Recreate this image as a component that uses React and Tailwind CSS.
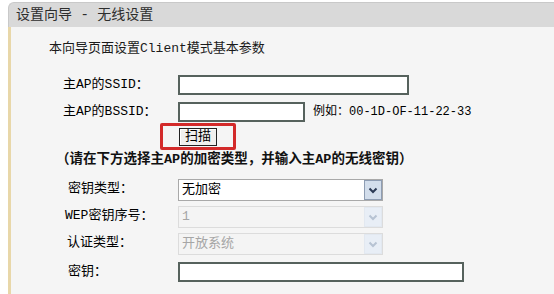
import React from 'react';

const font = { fontFamily: '"Liberation Mono", "Noto Sans CJK SC", monospace' };

const Chevron = ({ disabled }) => (
  <svg width="10" height="7" viewBox="0 0 10 7">
    <polyline
      points="1.5,1.5 5,5 8.5,1.5"
      fill="none"
      stroke={disabled ? '#b7c3d3' : '#2b3a55'}
      strokeWidth="2"
    />
  </svg>
);

const Select = ({ value, disabled }) => (
  <div
    className={`w-[205px] h-[22px] flex items-stretch border ${
      disabled ? 'border-[#dcdcdc] bg-[#f4f4f4] text-[#a6a6a6]' : 'border-[#a9a9a9] bg-white text-black'
    }`}
  >
    <div className="flex-1 flex items-center pl-[3px] text-[13px]">{value}</div>
    <div
      className={`w-[18px] flex items-center justify-center border ${
        disabled ? 'border-[#e2e8f0] bg-[#e8eef6]' : 'border-[#8e9db3] bg-[#d3deec]'
      }`}
    >
      <Chevron disabled={disabled} />
    </div>
  </div>
);

const TextInput = ({ width }) => (
  <div className={`${width} h-[20px] bg-white border-2 border-[#56625d]`} />
);

const Row = ({ label, indent = 'pl-[14px]', children }) => (
  <div className="flex items-center h-[20px]">
    <div className={`w-[129px] ${indent} text-[13px] text-black whitespace-nowrap`}>{label}</div>
    {children}
  </div>
);

const SelRow = ({ label, indent = 'pl-[17px]', children }) => (
  <div className="flex items-center h-[22px]">
    <div className={`w-[129px] ${indent} text-[13px] text-black whitespace-nowrap -mt-[3px]`}>{label}</div>
    {children}
  </div>
);

export default function App() {
  return (
    <div className="w-[554px] h-[294px] bg-white overflow-hidden pt-[2px] pl-[8px]" style={font}>
      {/* title bar */}
      <div className="h-[25px] bg-[#d9d9d9] rounded-tl-[6px] border-t border-l border-[#c9c9c9] flex items-center pl-[7px] text-[14px] text-[#2d2d2d] whitespace-pre">
        设置向导 - 无线设置
      </div>

      <div className="h-[270px] border-l-[3px] border-[#e8d7a9] bg-[#f5f5f5] pl-[38px] pt-[14px]">
        <div className="text-[13px] leading-[16px] text-[#1a1a1a] whitespace-nowrap">
          本向导页面设置Client模式基本参数
        </div>

        <div className="mt-[18px] flex flex-col gap-[7px]">
          <Row label="主AP的SSID：">
            <TextInput width="w-[231px]" />
          </Row>
          <Row label="主AP的BSSID：">
            <TextInput width="w-[127px]" />
            <span className="ml-[8px] text-[12px] text-black whitespace-nowrap">例如：00-1D-OF-11-22-33</span>
          </Row>
        </div>

        <div className="mt-[1px] h-[27px] pl-[111px]">
          <div className="w-[76px] h-[27px] border-[3px] border-[#d32a2a] rounded-[2px] flex items-center justify-center">
            <button className="w-[38px] h-[18px] bg-[#f0f0ee] border border-[#222] shadow-[inset_1px_1px_0_#ffffff] text-[13px] leading-none text-black flex items-center justify-center">
              扫描
            </button>
          </div>
        </div>

        <div className="mt-[2px] ml-[7px] text-[13.5px] leading-[16px] font-bold text-[#111] whitespace-nowrap">
          （请在下方选择主AP的加密类型，并输入主AP的无线密钥）
        </div>

        <div className="mt-[11px] flex flex-col gap-[5px]">
          <SelRow label="密钥类型：" indent="pl-[19px]">
            <Select value="无加密" />
          </SelRow>
          <SelRow label="WEP密钥序号：" indent="pl-[16px]">
            <Select value="1" disabled />
          </SelRow>
          <SelRow label="认证类型：" indent="pl-[18px]">
            <Select value="开放系统" disabled />
          </SelRow>
          <div className="mt-[2px]">
            <Row label="密钥：" indent="pl-[19px]">
              <TextInput width="w-[286px]" />
            </Row>
          </div>
        </div>
      </div>
    </div>
  );
}
